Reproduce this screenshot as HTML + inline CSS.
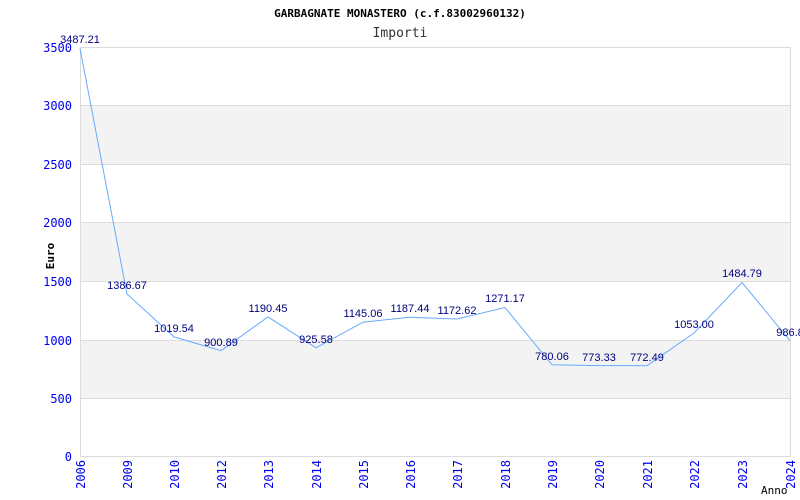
<!DOCTYPE html>
<html><head><meta charset="utf-8"><style>html,body{margin:0;padding:0;background:#fff}svg{display:block}</style></head><body>
<svg width="800" height="500" xmlns="http://www.w3.org/2000/svg">
<rect width="800" height="500" fill="#fff"/>
<g fill="#f3f3f3">
<rect x="80" y="105" width="710" height="59"/>
<rect x="80" y="222" width="710" height="59"/>
<rect x="80" y="340" width="710" height="58"/>
</g>
<g stroke="#dcdcdc" stroke-width="1">
<line x1="80" y1="47.5" x2="790" y2="47.5"/>
<line x1="80" y1="105.5" x2="790" y2="105.5"/>
<line x1="80" y1="164.5" x2="790" y2="164.5"/>
<line x1="80" y1="222.5" x2="790" y2="222.5"/>
<line x1="80" y1="281.5" x2="790" y2="281.5"/>
<line x1="80" y1="340.5" x2="790" y2="340.5"/>
<line x1="80" y1="398.5" x2="790" y2="398.5"/>
<line x1="80.5" y1="47" x2="80.5" y2="457"/>
<line x1="80" y1="456.5" x2="790" y2="456.5"/>
<line x1="790.5" y1="47" x2="790.5" y2="457"/>
</g>
<g font-family="'DejaVu Sans Mono',monospace" font-size="12" fill="#0000ee" text-anchor="end">
<text x="72" y="52">3500</text><text x="72" y="110">3000</text><text x="72" y="169">2500</text><text x="72" y="227">2000</text><text x="72" y="286">1500</text><text x="72" y="345">1000</text><text x="72" y="403">500</text><text x="72" y="461">0</text>
</g>
<g font-family="'DejaVu Sans Mono',monospace" font-size="12" fill="#0000ee" text-anchor="end">
<text transform="translate(85,460) rotate(-90)">2006</text>
<text transform="translate(132,460) rotate(-90)">2009</text>
<text transform="translate(179,460) rotate(-90)">2010</text>
<text transform="translate(226,460) rotate(-90)">2012</text>
<text transform="translate(273,460) rotate(-90)">2013</text>
<text transform="translate(321,460) rotate(-90)">2014</text>
<text transform="translate(368,460) rotate(-90)">2015</text>
<text transform="translate(415,460) rotate(-90)">2016</text>
<text transform="translate(462,460) rotate(-90)">2017</text>
<text transform="translate(510,460) rotate(-90)">2018</text>
<text transform="translate(557,460) rotate(-90)">2019</text>
<text transform="translate(604,460) rotate(-90)">2020</text>
<text transform="translate(652,460) rotate(-90)">2021</text>
<text transform="translate(699,460) rotate(-90)">2022</text>
<text transform="translate(747,460) rotate(-90)">2023</text>
<text transform="translate(795,460) rotate(-90)">2024</text>
</g>
<polyline fill="none" stroke="#66aaff" stroke-width="1" points="80,48.5 127,294 174,336.9 221,350.7 268,316.9 316,347.8 363,322.2 410,317.2 457,319 505,307.5 552,364.8 599,365.6 647,365.7 694,333 742,282.5 790,340.7"/>
<g font-family="'Liberation Sans',sans-serif" font-size="11" fill="#000080" text-anchor="middle">
<text x="80" y="43">3487.21</text>
<text x="127" y="289">1386.67</text>
<text x="174" y="332">1019.54</text>
<text x="221" y="346">900.89</text>
<text x="268" y="312">1190.45</text>
<text x="316" y="343">925.58</text>
<text x="363" y="317">1145.06</text>
<text x="410" y="312">1187.44</text>
<text x="457" y="314">1172.62</text>
<text x="505" y="302">1271.17</text>
<text x="552" y="360">780.06</text>
<text x="599" y="361">773.33</text>
<text x="647" y="361">772.49</text>
<text x="694" y="328">1053.00</text>
<text x="742" y="277">1484.79</text>
<text x="790" y="336">986.8</text>
</g>
<text x="400" y="17" font-family="'DejaVu Sans Mono',monospace" font-size="11" font-weight="bold" text-anchor="middle" fill="#000">GARBAGNATE MONASTERO (c.f.83002960132)</text>
<text x="400" y="37" font-family="'DejaVu Sans Mono',monospace" font-size="13" text-anchor="middle" fill="#333">Importi</text>
<text transform="translate(54,256) rotate(-90)" font-family="'DejaVu Sans Mono',monospace" font-size="11" font-weight="bold" text-anchor="middle" fill="#000">Euro</text>
<text x="761" y="494" font-family="'DejaVu Sans Mono',monospace" font-size="11" fill="#000">Anno</text>
</svg>
</body></html>
